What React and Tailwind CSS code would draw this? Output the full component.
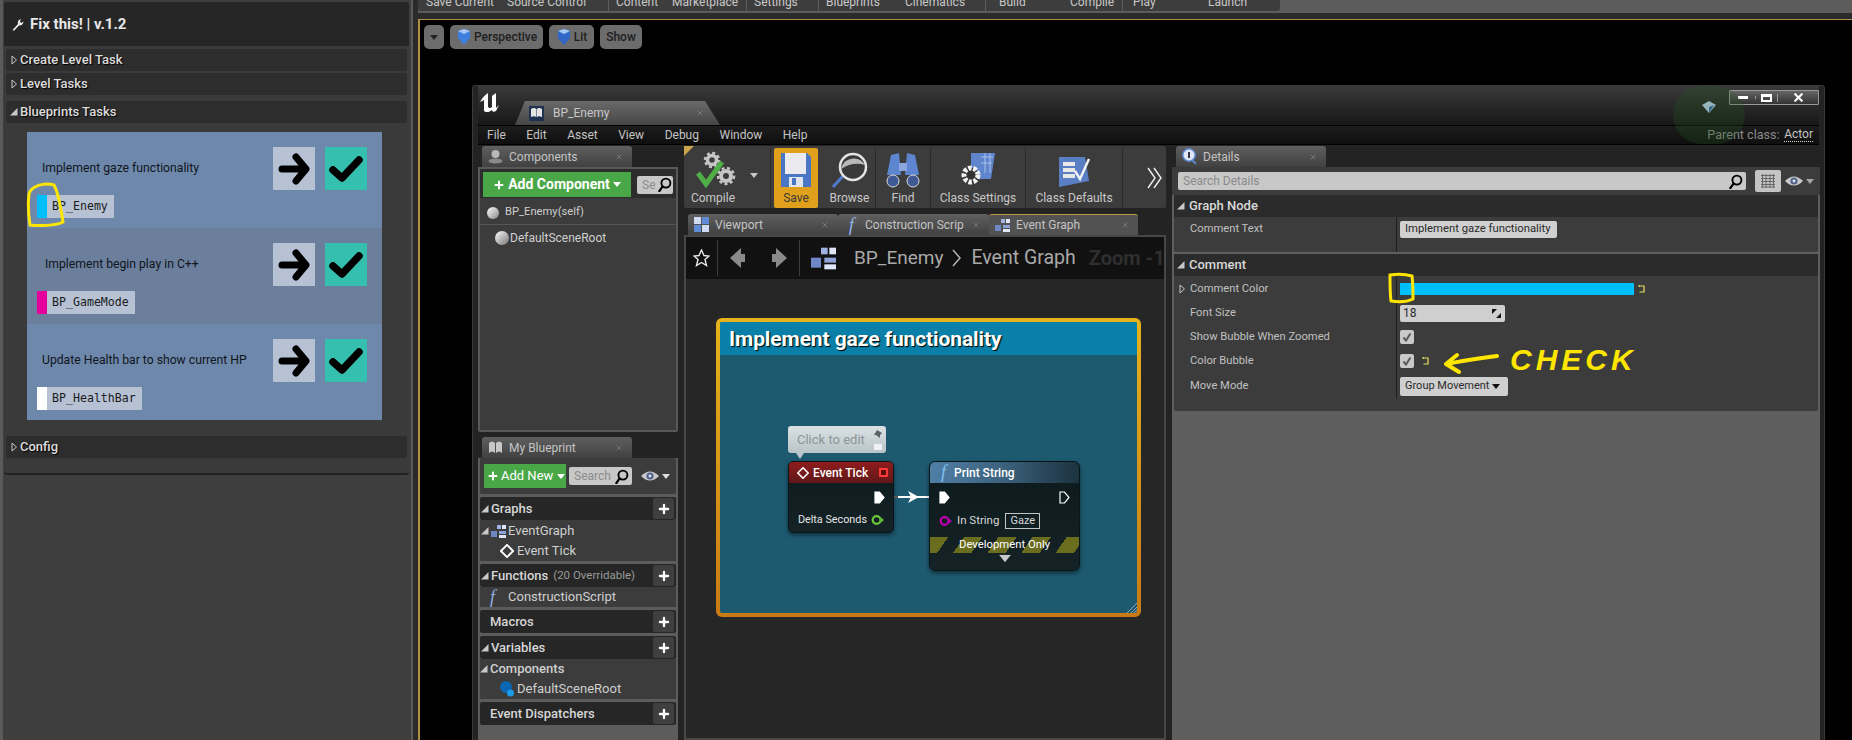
import { X, Plus } from "lucide-react";

const Tri = ({ open = false, className = "" }) =>
    open ? (
        <svg width="8" height="8" viewBox="0 0 8 8" className={`shrink-0 ${className}`}>
            <path d="M0 7.5 L7.5 7.5 L7.5 0 Z" fill="#c8c8c8" />
        </svg>
    ) : (
        <svg width="7" height="10" viewBox="0 0 7 10" className={`shrink-0 ${className}`}>
            <path d="M1 1 L5.5 5 L1 9 Z" fill="none" stroke="#c8c8c8" strokeWidth="1" />
        </svg>
    );

const Caret = ({ className = "", color = "#ddd" }) => (
    <svg width="8" height="5" viewBox="0 0 8 5" className={`shrink-0 ${className}`}>
        <path d="M0 0 H8 L4 5 Z" fill={color} />
    </svg>
);

const Eye = () => (
    <svg width="18" height="12" viewBox="0 0 18 12" className="shrink-0">
        <path d="M0 6 Q9 -3 18 6 Q9 15 0 6 Z" fill="#c9c9c9" />
        <circle cx="9" cy="6" r="3.6" fill="#53638c" />
        <circle cx="9" cy="6" r="1.4" fill="#dfe6f5" />
    </svg>
);

const Loupe = ({ size = 16 }) => (
    <svg width={size} height={size} viewBox="0 0 16 16" className="shrink-0">
        <circle cx="9.5" cy="6.5" r="4.8" fill="none" stroke="#000" strokeWidth="2" />
        <path d="M6 10 L2.5 15" stroke="#000" strokeWidth="2.4" strokeLinecap="round" />
    </svg>
);

const Undo = () => (
    <svg width="7" height="8" viewBox="0 0 7 8" className="shrink-0">
        <path d="M0.5 1 H6 V7 H1.5" fill="none" stroke="#e8e060" strokeWidth="1.2" />
        <path d="M0 1 L2 0 V2 Z" fill="#e8e060" />
    </svg>
);

const GraphIcon = ({ size = 15 }) => (
    <svg width={size} height={size} viewBox="0 0 15 15" className="shrink-0">
        <rect x="0" y="7" width="6" height="6" fill="#6f86c4" />
        <rect x="6" y="1" width="4" height="4" fill="#9fb2e2" />
        <rect x="11" y="1" width="4" height="4" fill="#dfe6f7" />
        <rect x="8" y="7" width="7" height="3" fill="#8ea2d8" />
        <rect x="8" y="11" width="7" height="3" fill="#dfe6f7" />
    </svg>
);

const GridIcon = () => (
    <svg width="15" height="15" viewBox="0 0 15 15" className="shrink-0">
        <rect x="0" y="0" width="7" height="7" fill="#cfdcf4" />
        <rect x="8" y="0" width="7" height="7" fill="#5f8bd8" />
        <rect x="0" y="8" width="7" height="7" fill="#5f8bd8" />
        <rect x="8" y="8" width="7" height="7" fill="#cfdcf4" />
    </svg>
);

const Diamond = ({ size = 12 }) => (
    <svg width={size} height={size} viewBox="0 0 12 12" className="shrink-0">
        <path d="M6 0.8 L11.2 6 L6 11.2 L0.8 6 Z" fill="none" stroke="#fff" strokeWidth="1.6" />
    </svg>
);

const BookIcon = () => (
    <svg width="15" height="15" viewBox="0 0 15 15" className="shrink-0">
        <rect x="0" y="0" width="15" height="15" fill="#20304f" />
        <path d="M2 3 Q5 1 7.3 3 V11 Q5 9.5 2 11 Z M7.8 3 Q10 1 13 3 V11 Q10 9.5 7.8 11 Z" fill="#e4e4e4" />
    </svg>
);

const Tab = ({ icon, label, w = "w-[150px]", active = false }) => (
    <div className={`flex h-[21px] ${w} shrink-0 items-center gap-[6px] rounded-t-[3px] pl-[6px] pr-[9px] text-[12px] text-[#c4c4c4] ${active ? "border-t border-[#b79a45] bg-[#525252]" : "bg-gradient-to-b from-[#5f5f5f] to-[#414141]"}`}>
        {icon}
        <span className="truncate">{label}</span>
        <X size={8} className="ml-auto shrink-0 text-[#8a8a8a]" strokeWidth={2} />
    </div>
);

const SideHeader = ({ label, note, open = true }) => (
    <div className="mx-[2px] mt-[3px] flex h-[23px] items-center rounded-[2px] bg-[#262626] pr-[2px] text-[13px] font-medium text-[#d6d6d6]">
        <span className="flex w-[10px] justify-end pr-[1px]">{open && <Tri open />}</span>
        <span className="ml-[1px]">{label}</span>
        {note && <span className="ml-[5px] text-[11.5px] font-normal text-[#9a9a9a]">{note}</span>}
        <span className="ml-auto flex h-[21px] w-[21px] items-center justify-center rounded-[2px] bg-[#3f3f3f]">
            <Plus size={14} strokeWidth={4} className="text-white" />
        </span>
    </div>
);

const SideItem = ({ children, className = "" }) => (
    <div className={`flex h-[20px] items-center text-[13px] text-[#cfcfcf] ${className}`}>{children}</div>
);

const TaskRow = ({ text, tag, color, bg = "bg-[#6e88ab]", indent = "ml-[5px]" }) => (
    <div className={`flex h-[96px] flex-col px-[10px] pt-[15px] ${bg}`}>
        <div className="flex h-[43px] items-center">
            <span className={`${indent} text-[12.2px] text-[#10151c]`}>{text}</span>
            <div className="ml-auto mr-[5px] flex gap-[10px]">
                <div className="flex h-[43px] w-[42px] items-center justify-center bg-[#b6c2d4]">
                    <svg width="32" height="34" viewBox="0 0 32 34">
                        <path d="M4 17 H27 M18 5 L28 17 L18 29" fill="none" stroke="#000" strokeWidth="7" strokeLinecap="round" strokeLinejoin="round" />
                    </svg>
                </div>
                <div className="flex h-[43px] w-[42px] items-center justify-center bg-[#35bfae]">
                    <svg width="34" height="28" viewBox="0 0 34 28">
                        <path d="M4 15 L13 23 L30 5" fill="none" stroke="#000" strokeWidth="7.5" strokeLinecap="round" strokeLinejoin="round" />
                    </svg>
                </div>
            </div>
        </div>
        <div className="mt-[5px] flex h-[23px] w-fit items-stretch bg-[#b6c2d4]">
            <span className={`w-[10px] ${color}`} />
            <span className="pl-[5px] pr-[6px] font-['DejaVu_Sans_Mono'] text-[11.6px] leading-[23px] text-[#1a1a1a]">{tag}</span>
        </div>
    </div>
);

const AccordionHead = ({ label, open = false, className = "" }) => (
    <div className={`mx-[2px] flex h-[22px] items-center gap-[1px] rounded-[2px] bg-[#2d2d2d] pl-[3px] text-[13px] font-medium text-[#dcdcdc] ${className}`}>
        <span className="flex w-[10px] justify-center"><Tri open={open} /></span>
        <span className="[text-shadow:1px_1px_1px_#000]">{label}</span>
    </div>
);

const LeftPanel = () => (
    <div className="flex w-[413px] shrink-0 border-x-[3px] border-[#5a5a5a] border-r-[2px] bg-[#3e3e3e] pt-[2px]">
        <div className="ml-[1px] h-[473px] w-[405px] rounded-[3px] border-b-2 border-[#222] bg-[#3a3a3a]">
            <div className="flex h-[44px] items-center gap-[6px] rounded-t-[3px] bg-[#262626] pl-[7px] text-[15px] font-bold text-[#e8e8e8]">
                <svg width="13" height="13" viewBox="0 0 13 13">
                    <path d="M1.5 12 L7 6 Q6 2 10 1 L8.8 3.6 L10.4 5 L12.5 3.4 Q12 7.6 8 7.4 L3 12.8 Z" fill="#eee" />
                </svg>
                Fix this! | v.1.2
            </div>
            <div className="pt-[3px]">
                <AccordionHead label="Create Level Task" />
                <AccordionHead label="Level Tasks" className="mt-[2px]" />
                <AccordionHead label="Blueprints Tasks" open className="mt-[6px]" />
                <div className="ml-[23px] mt-[9px] w-[355px]">
                    <TaskRow text="Implement gaze functionality" tag="BP_Enemy" color="bg-[#00bfff]" />
                    <TaskRow text="Implement begin play in C++" tag="BP_GameMode" color="bg-[#e6009c]" bg="bg-[#6b7f9c]" indent="ml-[8px]" />
                    <TaskRow text="Update Health bar to show current HP" tag="BP_HealthBar" color="bg-white" />
                </div>
                <AccordionHead label="Config" className="mt-[16px]" />
            </div>
        </div>
    </div>
);

// label, cell width, left padding, separator on the left
const topItems = [
    ["Save Current", 81, 0, false],
    ["Source Control", 101, 0, false],
    ["Content", 64, 7, true],
    ["Marketplace", 74, 0, false],
    ["Settings", 72, 7, true],
    ["Blueprints", 87, 7, true],
    ["Cinematics", 80, 0, false],
    ["Build", 85, 13, true],
    ["Compile", 52, 0, false],
    ["Play", 86, 10, true],
    ["Launch", 72, 0, false],
];

const TopBar = () => (
    <div className="h-[19px] shrink-0 border-b-[6px] border-[#2b2b2b] bg-[#5c5c5c]">
        <div className="flex h-[11px] w-[862px] overflow-hidden rounded-b-[3px] bg-[#3d3d3d] pl-[8px] text-[12px] leading-[14px] text-[#c8c8c8]">
            {topItems.map(([t, w, pl, sep]) => (
                <span key={t} className={`h-[11px] shrink-0 ${sep ? "border-l border-[#5c5c5c]" : ""}`} style={{ width: w, paddingLeft: pl }}>
                    <span className="relative top-[-5px] block whitespace-nowrap">{t}</span>
                </span>
            ))}
        </div>
    </div>
);

const ViewChip = ({ children, className = "" }) => (
    <div className={`flex h-[24px] items-center justify-center gap-[2px] rounded-[5px] bg-[#6c6c6c] text-[12px] font-medium text-[#202020] ${className}`}>{children}</div>
);

const Gem = ({ w = 14, color = "#3d7fdc" }) => (
    <svg width={w} height="16" viewBox="0 0 14 16" className="shrink-0">
        <path d="M1 2 L7 0 L13 2 L13 9 L7 16 L1 9 Z" fill={color} />
        <path d="M1 2 L7 0 L13 2 L7 5 Z" fill="#a6c8f5" />
    </svg>
);

const ToolItem = ({ label, icon, w, active = false, divider = true }) => (
    <div className={`flex h-[60px] shrink-0 flex-col items-center justify-between pb-[3px] pt-[3px] text-[12px] ${w} ${active ? "rounded-[2px] bg-[#e0a01c] text-[#3a3a3a]" : "text-[#c8c8c8]"} ${divider ? "border-r border-[#2a2a2a]" : ""}`}>
        <div className="flex h-[38px] items-center justify-center">{icon}</div>
        <span className="whitespace-nowrap">{label}</span>
    </div>
);

const Toolbar = () => (
    <div className="relative flex h-[62px] items-center rounded-[2px] bg-[#3c3c3c] pl-[4px] pt-[1px]">
        <div className="absolute left-0 top-0 h-0 w-0 border-l-[10px] border-t-[10px] border-l-[#caa44a] border-t-transparent [transform:scaleY(-1)]" />
        <div className="relative w-[83px] shrink-0">
            <ToolItem
                w="w-[83px]"
                label={<span className="pr-[32px]">Compile</span>}
                icon={
                    <svg width="44" height="38" viewBox="0 0 44 38" className="mr-[27px]">
                        <circle cx="18" cy="9" r="4.5" fill="none" stroke="#c6c6c6" strokeWidth="3.5" />
                        <circle cx="18" cy="9" r="7" fill="none" stroke="#c6c6c6" strokeWidth="2.5" strokeDasharray="3 2.5" />
                        <circle cx="32" cy="25" r="5" fill="none" stroke="#c6c6c6" strokeWidth="4" />
                        <circle cx="32" cy="25" r="8" fill="none" stroke="#c6c6c6" strokeWidth="2.5" strokeDasharray="3 2.5" />
                        <path d="M4 22 L12 33 L28 11" fill="none" stroke="#4fae46" strokeWidth="5" />
                    </svg>
                }
            />
            <Caret className="absolute left-[62px] top-[25px]" color="#c8c8c8" />
        </div>
        <div className="w-[3px] shrink-0" />
        <ToolItem
            w="w-[44px] mr-[6px]"
            active
            divider={false}
            label="Save"
            icon={
                <svg width="32" height="38" viewBox="0 0 32 38">
                    <path d="M1 2 H27 L31 6 V36 H1 Z" fill="#4a76c6" />
                    <rect x="5" y="2" width="21" height="21" fill="#e9e9ee" />
                    <rect x="9" y="26" width="14" height="10" fill="#dfe4ee" />
                    <rect x="12" y="27" width="4" height="7" fill="#4a76c6" />
                </svg>
            }
        />
        <ToolItem
            w="w-[52px]"
            label="Browse"
            icon={
                <svg width="38" height="38" viewBox="0 0 38 38">
                    <path d="M12 25 L2 36" stroke="#4d7ccc" strokeWidth="3" />
                    <circle cx="22" cy="16" r="13" fill="#3a3a3a" stroke="#e4e4e4" strokeWidth="2.5" />
                    <path d="M10 18 A13 13 0 0 1 34 14 Q22 10 10 18 Z" fill="#b9b9b9" />
                </svg>
            }
        />
        <ToolItem
            w="w-[55px]"
            label="Find"
            icon={
                <svg width="38" height="38" viewBox="0 0 38 38">
                    <path d="M7 4 L15 2 L17 24 H3 Z M31 4 L23 2 L21 24 H35 Z" fill="#5e85cf" />
                    <rect x="15" y="12" width="8" height="8" fill="#8aa6dd" />
                    <circle cx="9" cy="30" r="6" fill="#3f5a95" stroke="#dcdcdc" />
                    <circle cx="29" cy="30" r="6" fill="#3f5a95" stroke="#dcdcdc" />
                </svg>
            }
        />
        <ToolItem
            w="w-[95px]"
            label="Class Settings"
            icon={
                <svg width="42" height="38" viewBox="0 0 42 38">
                    <path d="M14 2 H38 L34 28 H14 Z" fill="#5f85cd" />
                    <path d="M24 6 H36 M24 12 H35 M28 2 V22 M33 2 V22" stroke="#a9c0ec" strokeWidth="1" />
                    <circle cx="14" cy="24" r="7" fill="#333" stroke="#f2f2f2" strokeWidth="5" strokeDasharray="3.4 1.6" />
                </svg>
            }
        />
        <ToolItem
            w="w-[97px]"
            label="Class Defaults"
            icon={
                <svg width="38" height="38" viewBox="0 0 38 38">
                    <path d="M4 6 L30 6 L34 30 L4 36 Z" fill="#5a7ec4" />
                    <path d="M8 13 H20 M8 19 H20 M8 25 H20" stroke="#e8e8e8" strokeWidth="4" />
                    <path d="M20 20 L25 28 L34 8" fill="none" stroke="#f3f3f3" strokeWidth="2.4" />
                </svg>
            }
        />
        <svg width="16" height="22" viewBox="0 0 16 22" className="ml-auto mr-[3px] shrink-0">
            <path d="M1 1 L8 11 L1 21 M7 1 L14 11 L7 21" fill="none" stroke="#efefef" strokeWidth="1.4" />
        </svg>
    </div>
);

const Pin = ({ fill = "#fff", stroke = "#fff" }) => (
    <svg width="11" height="13" viewBox="0 0 11 13" className="shrink-0">
        <path d="M1 1 H5.5 L10 6.5 L5.5 12 H1 Z" fill={fill} stroke={stroke} strokeWidth="1.2" />
    </svg>
);

const DataPin = ({ color }) => (
    <svg width="13" height="12" viewBox="0 0 13 12" className="shrink-0">
        <circle cx="5.6" cy="6" r="3.9" fill="none" stroke={color} strokeWidth="2.2" />
        <path d="M10.4 3.6 L12.8 6 L10.4 8.4 Z" fill={color} />
    </svg>
);

const CommentBox = () => (
    <div className="ml-[30px] mt-[39px] h-[299px] w-[425px] rounded-[6px] bg-gradient-to-b from-[#e5b31b] to-[#c97a14] p-[4px]">
        <div className="relative h-full rounded-[2px] bg-[#1d5a70]">
            <div className="flex h-[33px] items-center rounded-t-[2px] bg-[#0a7fa8] pl-[9px] pt-[3px] text-[21px] font-bold tracking-[-0.1px] text-white [text-shadow:1px_1px_1px_#000]">
                Implement gaze functionality
            </div>

            <div className="absolute left-[68px] top-[104px] flex h-[27px] w-[98px] items-center rounded-[3px] bg-gradient-to-b from-[#dbe2e4] to-[#b8c4c8] pl-[9px] text-[13px] text-[#8b9498]">
                Click to edit
                <svg width="9" height="22" viewBox="0 0 9 22" className="ml-auto mr-[3px]">
                    <path d="M3 1 L8 4 L6 6 L6 9 L2 6 L0 6 Z" fill="#5c6366" />
                    <rect x="0" y="15" width="8" height="6" fill="#eef2f3" />
                </svg>
            </div>
            <div className="absolute left-[76px] top-[131px] h-0 w-0 border-x-[4px] border-t-[6px] border-x-transparent border-t-[#b8c4c8]" />

            <div className="absolute left-[68px] top-[139px] h-[72px] w-[106px] overflow-hidden rounded-[5px] border border-[#08161a] bg-gradient-to-b from-[#0c191d] to-[#152226] shadow-[0_2px_4px_rgba(0,0,0,0.5)]">
                <div className="flex h-[21px] items-center gap-[4px] bg-gradient-to-b from-[#8f1c1c] to-[#5f1818] pl-[8px] text-[12px] font-medium text-white">
                    <Diamond />
                    Event Tick
                    <span className="ml-auto mr-[5px] h-[9px] w-[9px] rounded-[1px] border-2 border-[#ff3a3a] bg-[#5a0e0e]" />
                </div>
                <div className="flex h-[29px] items-center justify-end pr-[8px]"><Pin /></div>
                <div className="flex items-center justify-end gap-[4px] pr-[9px] text-[10.8px] text-[#e6e6e6]">
                    Delta Seconds
                    <DataPin color="#6cc63c" />
                </div>
            </div>

            <svg width="36" height="14" viewBox="0 0 36 14" className="absolute left-[174px] top-[168px]">
                <path d="M0 7 H4" stroke="#555" strokeWidth="2" />
                <path d="M4 7 H36" stroke="#fff" strokeWidth="2" />
                <path d="M14 1 L25 7 L14 13 L17 7 Z" fill="#fff" />
            </svg>

            <div className="absolute left-[209px] top-[139px] h-[110px] w-[151px] overflow-hidden rounded-[6px] border border-[#08161a] bg-gradient-to-b from-[#0c191d] to-[#152226] shadow-[0_2px_4px_rgba(0,0,0,0.5)]">
                <div className="flex h-[21px] items-center bg-gradient-to-r from-[#4f7fa6] via-[#3c617c] to-[#1c3340] pl-[11px] text-[12px] font-medium text-white">
                    <span className="w-[13px] font-['Liberation_Serif'] text-[18px] italic text-[#7fc0ef]">f</span>
                    Print String
                </div>
                <div className="flex h-[29px] items-center justify-between px-[9px]">
                    <Pin />
                    <Pin fill="none" />
                </div>
                <div className="flex items-center gap-[5px] pl-[9px] text-[11.5px] text-[#d8d8d8]">
                    <DataPin color="#c000b0" />
                    In String
                    <span className="ml-[1px] border border-[#c4c4c4] px-[4px] text-[11px] leading-[14px]">Gaze</span>
                </div>
                <div className="mt-[8px] flex h-[16px] items-center justify-center bg-[repeating-linear-gradient(125deg,#6a6c1e_0,#6a6c1e_15px,transparent_15px,transparent_28px)] text-[11.3px] text-white">
                    Development Only
                </div>
                <div className="mt-[3px] flex justify-center"><Caret color="#c8c8c8" className="scale-150" /></div>
            </div>

            <svg width="10" height="10" viewBox="0 0 10 10" className="absolute bottom-0 right-0">
                <path d="M0 10 L10 0 M4 10 L10 4 M7 10 L10 7" stroke="#8aa5b0" strokeWidth="1" />
            </svg>
        </div>
    </div>
);

const GraphPanel = () => (
    <div className="flex min-w-0 flex-col">
        <Toolbar />
        <div className="mt-[6px] flex pl-[4px]">
            <Tab w="w-[150px]" icon={<GridIcon />} label="Viewport" />
            <Tab w="w-[151px]" icon={<span className="w-[15px] text-center font-['Liberation_Serif'] text-[19px] italic leading-[15px] text-[#8fb2e6]">f</span>} label="Construction Scrip" />
            <Tab w="w-[149px]" icon={<GraphIcon />} label="Event Graph" active />
        </div>
        <div className="h-[505px] border-2 border-[#474747] bg-[#262626]">
            <div className="flex h-[42px] items-center overflow-hidden whitespace-nowrap bg-[#111]">
                <svg width="17" height="18" viewBox="0 0 17 18" className="ml-[7px] shrink-0">
                    <path d="M8.5 1 L11 6.5 L16 7 L12 10.5 L13.5 16.5 L8.5 13.5 L3.5 16.5 L5 10.5 L1 7 L6 6.5 Z" fill="none" stroke="#e8e8e8" strokeWidth="1.4" />
                </svg>
                <span className="ml-[7px] h-[36px] w-px shrink-0 bg-[#3c3c3c]" />
                <svg width="17" height="20" viewBox="0 0 17 20" className="ml-[11px] shrink-0"><path d="M12 0 V20 L1 10 Z" fill="#8a8a8a" /><rect x="9" y="6" width="7" height="8" fill="#8a8a8a" /></svg>
                <svg width="17" height="20" viewBox="0 0 17 20" className="ml-[25px] shrink-0"><path d="M5 0 V20 L16 10 Z" fill="#8a8a8a" /><rect x="1" y="6" width="7" height="8" fill="#8a8a8a" /></svg>
                <span className="ml-[11px] h-[36px] w-px shrink-0 bg-[#3c3c3c]" />
                <span className="ml-[11px] shrink-0"><GraphIcon size={25} /></span>
                <span className="ml-[18px] shrink-0 text-[19px] text-[#a9a9a9]">BP_Enemy</span>
                <svg width="10" height="18" viewBox="0 0 10 18" className="mx-[9px] shrink-0"><path d="M1 1 L8 9 L1 17" fill="none" stroke="#b4b4b4" strokeWidth="1.5" /></svg>
                <span className="shrink-0 text-[19.5px] text-[#a9a9a9]">Event Graph</span>
                <span className="ml-[13px] shrink-0 text-[20px] font-bold text-[#2f2f2f]">Zoom -1</span>
            </div>
            <CommentBox />
        </div>
    </div>
);

const ComponentsColumn = () => (
    <div className="flex w-[200px] shrink-0 flex-col">
        <div className="pl-[4px]">
            <Tab label="Components" icon={<svg width="15" height="15" viewBox="0 0 15 15" className="shrink-0"><circle cx="7.5" cy="5" r="4" fill="#b8b8b8" /><ellipse cx="7.5" cy="12" rx="7" ry="2.4" fill="#8a8a8a" /></svg>} />
        </div>
        <div className="h-[265px] rounded-b-[2px] border-2 border-[#585858] bg-[#3c3c3c]">
            <div className="flex h-[29px] items-center gap-[6px] bg-[#2d2d2d] pl-[3px] pt-[2px]">
                <div className="flex h-[25px] w-[148px] items-center justify-center gap-[3px] bg-[#4aa748] text-[14px] font-bold text-white">
                    <Plus size={12} strokeWidth={4} />
                    Add Component
                    <Caret color="#fff" />
                </div>
                <div className="flex h-[18px] w-[36px] items-center overflow-hidden rounded-[2px] bg-[#c8c8c8] pl-[5px] text-[12px] text-[#8c8c8c]">
                    Se
                    <span className="ml-[1px]"><Loupe size={15} /></span>
                </div>
            </div>
            <div className="flex h-[27px] items-center gap-[6px] border-b border-[#555] pl-[7px] pt-[3px] text-[11.2px] text-[#cfcfcf]">
                <span className="h-[12px] w-[12px] rounded-full bg-gradient-to-br from-white to-[#8a8a8a]" />
                BP_Enemy(self)
            </div>
            <div className="flex h-[25px] items-center gap-[1px] pl-[15px] text-[12px] text-[#cfcfcf]">
                <span className="relative h-[14px] w-[14px] rounded-full bg-gradient-to-br from-white to-[#777]" />
                DefaultSceneRoot
            </div>
        </div>

        <div className="mt-[5px] pl-[4px]">
            <Tab label="My Blueprint" icon={<svg width="15" height="15" viewBox="0 0 15 15" className="shrink-0"><path d="M1 3 Q4 0 7 3 V13 Q4 10 1 13 Z M8 3 Q11 0 14 3 V13 Q11 10 8 13 Z" fill="#c8c8c8" /></svg>} />
        </div>
        <div className="h-[282px] bg-[#5c5c5c] px-[2px]">
            <div className="flex h-[36px] items-center gap-[3px] rounded-[2px] bg-[#3c3c3c] pl-[4px]">
                <div className="flex h-[24px] w-[82px] shrink-0 items-center gap-[2px] bg-[#4aa748] pl-[3px] text-[13px] text-white">
                    <Plus size={12} strokeWidth={4} />
                    Add New
                    <Caret color="#fff" className="ml-[2px]" />
                </div>
                <div className="flex h-[18px] w-[63px] items-center rounded-[2px] bg-[#c8c8c8] pl-[5px] text-[12px] text-[#8c8c8c]">
                    Search
                    <span className="ml-[3px]"><Loupe size={15} /></span>
                </div>
                <span className="ml-[6px]"><Eye /></span>
                <Caret color="#ddd" />
            </div>
            <div className="-mx-[2px]">
                <SideHeader label="Graphs" />
            </div>
            <div className="bg-[#3c3c3c] pt-[1px]">
                <SideItem className="pl-[1px]"><Tri open /><span className="mx-[2px]"><GraphIcon /></span>EventGraph</SideItem>
                <SideItem className="pl-[20px]"><span className="mr-[3px]"><Diamond size={14} /></span>Event Tick</SideItem>
            </div>
            <div className="-mx-[2px]">
                <SideHeader label="Functions" note="(20 Overridable)" />
            </div>
            <div className="bg-[#3c3c3c]">
                <SideItem className="pl-[10px]"><span className="mr-[3px] w-[15px] font-['Liberation_Serif'] text-[18px] italic text-[#8fb2e6]">f</span>ConstructionScript</SideItem>
            </div>
            <div className="-mx-[2px]">
                <SideHeader label={<span className="ml-[-1px]">Macros</span>} open={false} />
                <SideHeader label="Variables" />
            </div>
            <div className="bg-[#3c3c3c]">
                <SideItem className="h-[19px] font-medium"><Tri open /><span className="ml-[2px]">Components</span></SideItem>
                <SideItem className="h-[18px] pl-[20px]"><svg width="14" height="16" viewBox="0 0 14 16" className="mr-[3px]"><circle cx="6" cy="6" r="6" fill="#0b66b3" /><circle cx="10.5" cy="12" r="3.5" fill="#1e9ae8" /></svg>DefaultSceneRoot</SideItem>
            </div>
            <div className="-mx-[2px]">
                <SideHeader label={<span className="ml-[-1px]">Event Dispatchers</span>} open={false} />
            </div>
        </div>
    </div>
);

const CheckBox = () => (
    <div className="flex h-[14px] w-[14px] items-center justify-center rounded-[2px] bg-[#c9c9c9]">
        <svg width="10" height="10" viewBox="0 0 10 10"><path d="M1.5 5.5 L4 8.5 L8.5 1.5" fill="none" stroke="#5a5a5a" strokeWidth="2" /></svg>
    </div>
);

const DetailRow = ({ label, children, expand = false, h = "h-[24px]" }) => (
    <div className={`flex ${h} items-center`}>
        <div className="flex h-full w-[222px] shrink-0 items-center pl-[16px] text-[11.2px] text-[#c0c0c0]">
            {label}
        </div>
        {expand && <span className="absolute left-[5px]"><Tri /></span>}
        <div className="flex h-full flex-1 items-center border-l border-[#1f1f1f] pl-[3px]">{children}</div>
    </div>
);

const DetailsColumn = () => (
    <div className="flex w-[648px] shrink-0 flex-col">
        <div className="pl-[4px]">
            <Tab
                label="Details"
                w="w-[150px]"
                icon={<svg width="15" height="17" viewBox="0 0 15 17" className="shrink-0"><circle cx="7" cy="7" r="6.2" fill="#dfe7f5" stroke="#5f85cd" strokeWidth="1.5" /><path d="M7 4 V10" stroke="#334" strokeWidth="2" /><path d="M10 12 L14 16" stroke="#5f85cd" strokeWidth="2" /></svg>}
            />
        </div>
        <div className="h-[573px] bg-[#5e5e5e]">
            <div className="flex h-[28px] items-center bg-[#3c3c3c] pl-[6px] pr-[5px]">
                <div className="flex h-[18px] w-[568px] items-center justify-between rounded-[2px] bg-[#c8c8c8] pl-[5px] pr-[3px] text-[12px] text-[#8a8a8a]">
                    Search Details
                    <Loupe size={15} />
                </div>
                <div className="ml-[9px] flex h-[22px] w-[26px] items-center justify-center rounded-[2px] bg-[#c4c4c4]">
                    <svg width="14" height="14" viewBox="0 0 14 14">
                        <path d="M0 1.5 H14 M0 4.5 H14 M0 7.5 H14 M0 10.5 H14 M0 13 H14 M1.5 0 V14 M5 0 V14 M9 0 V14 M12.5 0 V14" stroke="#666" strokeWidth="1" />
                    </svg>
                </div>
                <span className="ml-[4px]"><Eye /></span>
                <Caret className="ml-[3px]" color="#a5a5a5" />
            </div>
            <div className="mx-[2px] rounded-[2px] bg-[#3c3c3c]">
                <div className="flex h-[22px] items-center gap-[4px] bg-[#2b2b2b] pl-[3px] text-[13px] font-medium text-[#d8d8d8]">
                    <Tri open />Graph Node
                </div>
                <DetailRow label={<span className="-mt-[10px]">Comment Text</span>} h="h-[35px]">
                    <div className="-mt-[10px] flex h-[17px] w-[157px] items-center whitespace-nowrap rounded-[2px] bg-[#d0d0d0] pl-[5px] text-[11.3px] text-[#2a2a2a]">Implement gaze functionality</div>
                </DetailRow>
            </div>
            <div className="mx-[2px] mt-[2px] rounded-[2px] bg-[#3c3c3c] pb-[12px]">
                <div className="flex h-[22px] items-center gap-[4px] bg-[#2b2b2b] pl-[3px] text-[13px] font-medium text-[#d8d8d8]">
                    <Tri open />Comment
                </div>
                <div className="relative pt-[1px]">
                    <DetailRow label="Comment Color" expand>
                        <div className="h-[12px] w-[234px] bg-[#00bfff]" />
                        <span className="ml-[4px]"><Undo /></span>
                    </DetailRow>
                    <DetailRow label="Font Size">
                        <div className="flex h-[17px] w-[105px] items-center justify-between rounded-[2px] bg-[#cfcfcf] pl-[3px] pr-[4px] text-[12px] text-[#2a2a2a]">
                            18
                            <svg width="9" height="9" viewBox="0 0 9 9"><path d="M0 0 H5 L0 5 Z M9 9 H4 L9 4 Z" fill="#111" /></svg>
                        </div>
                    </DetailRow>
                    <DetailRow label="Show Bubble When Zoomed">
                        <CheckBox />
                    </DetailRow>
                    <DetailRow label="Color Bubble">
                        <CheckBox />
                        <span className="ml-[8px]"><Undo /></span>
                        <svg width="56" height="26" viewBox="0 0 56 26" className="ml-[14px] mt-[2px] shrink-0">
                            <path d="M54 7 C40 9 22 11 4 15 M14 6 L3 15 L16 23" fill="none" stroke="#ffe600" strokeWidth="4" strokeLinecap="round" strokeLinejoin="round" />
                        </svg>
                        <span className="ml-[11px] mt-[-2px] font-['Liberation_Sans'] text-[30px] font-bold italic leading-[26px] tracking-[4px] text-[#ffe600]">CHECK</span>
                    </DetailRow>
                    <DetailRow label="Move Mode" h="h-[26px]">
                        <div className="flex h-[19px] w-[108px] items-center gap-[3px] rounded-[2px] bg-[#cfcfcf] pl-[5px] text-[11px] text-[#2a2a2a]">
                            Group Movement
                            <Caret color="#111" />
                        </div>
                    </DetailRow>
                    <svg width="28" height="32" viewBox="0 0 28 32" className="absolute left-[213px] top-[-4px]">
                        <path d="M3 3 C10 2 18 2 25 4 C26 12 26 20 26 27 C20 30 10 30 4 29 C3 22 3 12 3 3 Z" fill="none" stroke="#ffe600" strokeWidth="3" />
                    </svg>
                </div>
            </div>
        </div>
    </div>
);

const BlueprintWindow = () => (
    <div className="ml-[52px] mt-[36px] h-[700px] w-[1353px] rounded-t-[3px] border border-[#3a3a3a] bg-[#232323] px-[5px]">
        <div className="relative flex h-[39px] bg-gradient-to-b from-[#3a3a3a] to-[#181818]">
            <svg width="37" height="24" viewBox="0 0 37 24" className="mt-[6px] shrink-0">
                <path d="M2 10 C4 6 7 3 10 1 V14 C10 16 12 17 14 15 V4 C15 3 17 2 18 1 V16 L21 13 L18 19 L15 20 L14 18 C12 20 8 21 6 19 V8 Z" fill="#fff" />
            </svg>
            <div className="mt-[15px] flex h-[24px] w-[205px] items-center gap-[9px] bg-gradient-to-b from-[#6a6a6a] to-[#464646] pl-[14px] pr-[16px] text-[12px] text-[#c8c8c8] [clip-path:polygon(10px_0,190px_0,205px_100%,0_100%)]">
                <BookIcon />
                BP_Enemy
                <X size={8} className="ml-auto text-[#8a8a8a]" />
            </div>
            <div className="ml-auto flex h-[24px] items-start">
                <span className="mr-[12px] mt-[13px]">
                    <svg width="16" height="17" viewBox="0 0 16 17"><path d="M1 6 L8 2 L15 6 L8 14 Z" fill="#bcd6f2" /><path d="M8 8 L13 6 L8 14 Z" fill="#3f6aa8" /></svg>
                </span>
                <div className="mt-[4px] flex h-[15px] w-[90px] items-center rounded-[1px] border border-[#999] bg-gradient-to-b from-[#666] to-[#333]">
                    <span className="flex w-[26px] justify-center border-r border-[#999]"><span className="h-[3px] w-[10px] bg-white" /></span>
                    <span className="flex w-[22px] justify-center border-r border-[#999]"><span className="h-[8px] w-[11px] border-2 border-t-[3px] border-white" /></span>
                    <span className="flex flex-1 justify-center"><X size={13} strokeWidth={4} className="text-white" /></span>
                </div>
            </div>
            <div className="pointer-events-none absolute right-[74px] top-0 z-10 h-[58px] w-[72px] rounded-full bg-[#1f5a1f] opacity-25" />
        </div>
        <div className="relative flex h-[20px] items-center gap-[20.5px] border-y border-black bg-gradient-to-b from-[#1d1d1d] to-[#0f0f0f] pl-[9px] text-[12px] text-[#c4c4c4]">
            {["File", "Edit", "Asset", "View", "Debug", "Window", "Help"].map((m) => (
                <span key={m}>{m}</span>
            ))}
            <span className="ml-auto text-[12.6px] text-[#8a8a8a]">Parent class:</span>
            <span className="-ml-[16px] mr-[6px] border-b border-dotted border-[#d0d0d0] leading-[13px]">Actor</span>
        </div>
        <div className="mt-[1px] flex gap-[6px]">
            <ComponentsColumn />
            <div className="w-[482px] shrink-0"><GraphPanel /></div>
            <DetailsColumn />
        </div>
    </div>
);

const App = () => {
    return (
        <div className="relative flex h-[740px] w-[1852px] overflow-hidden bg-black font-['Roboto',sans-serif]">
            <LeftPanel />
            <div className="w-[5px] shrink-0 bg-[#2a2a2a]" />
            <div className="flex min-w-0 flex-1 flex-col">
                <TopBar />
                <div className="flex-1 border-l-2 border-t border-[#b08f42] bg-black">
                    <div className="flex gap-[6px] pl-[4px] pt-[5px]">
                        <ViewChip className="w-[20px]"><Caret color="#222" /></ViewChip>
                        <ViewChip className="w-[93px]"><Gem w={16} />Perspective</ViewChip>
                        <ViewChip className="w-[45px]"><Gem w={16} color="#2f66c8" />Lit</ViewChip>
                        <ViewChip className="w-[42px]">Show</ViewChip>
                    </div>
                    <BlueprintWindow />
                </div>
            </div>
            {/* yellow scribble round the tag */}
            <svg width="40" height="50" viewBox="0 0 40 50" className="pointer-events-none absolute left-[26px] top-[180px]">
                <path d="M3 14 C5 6 18 2 28 5 C33 14 35 30 37 42 C30 46 12 46 4 45 C2 32 2 22 3 14 Z" fill="none" stroke="#ffe600" strokeWidth="3" />
            </svg>
        </div>
    );
};

export default App;
